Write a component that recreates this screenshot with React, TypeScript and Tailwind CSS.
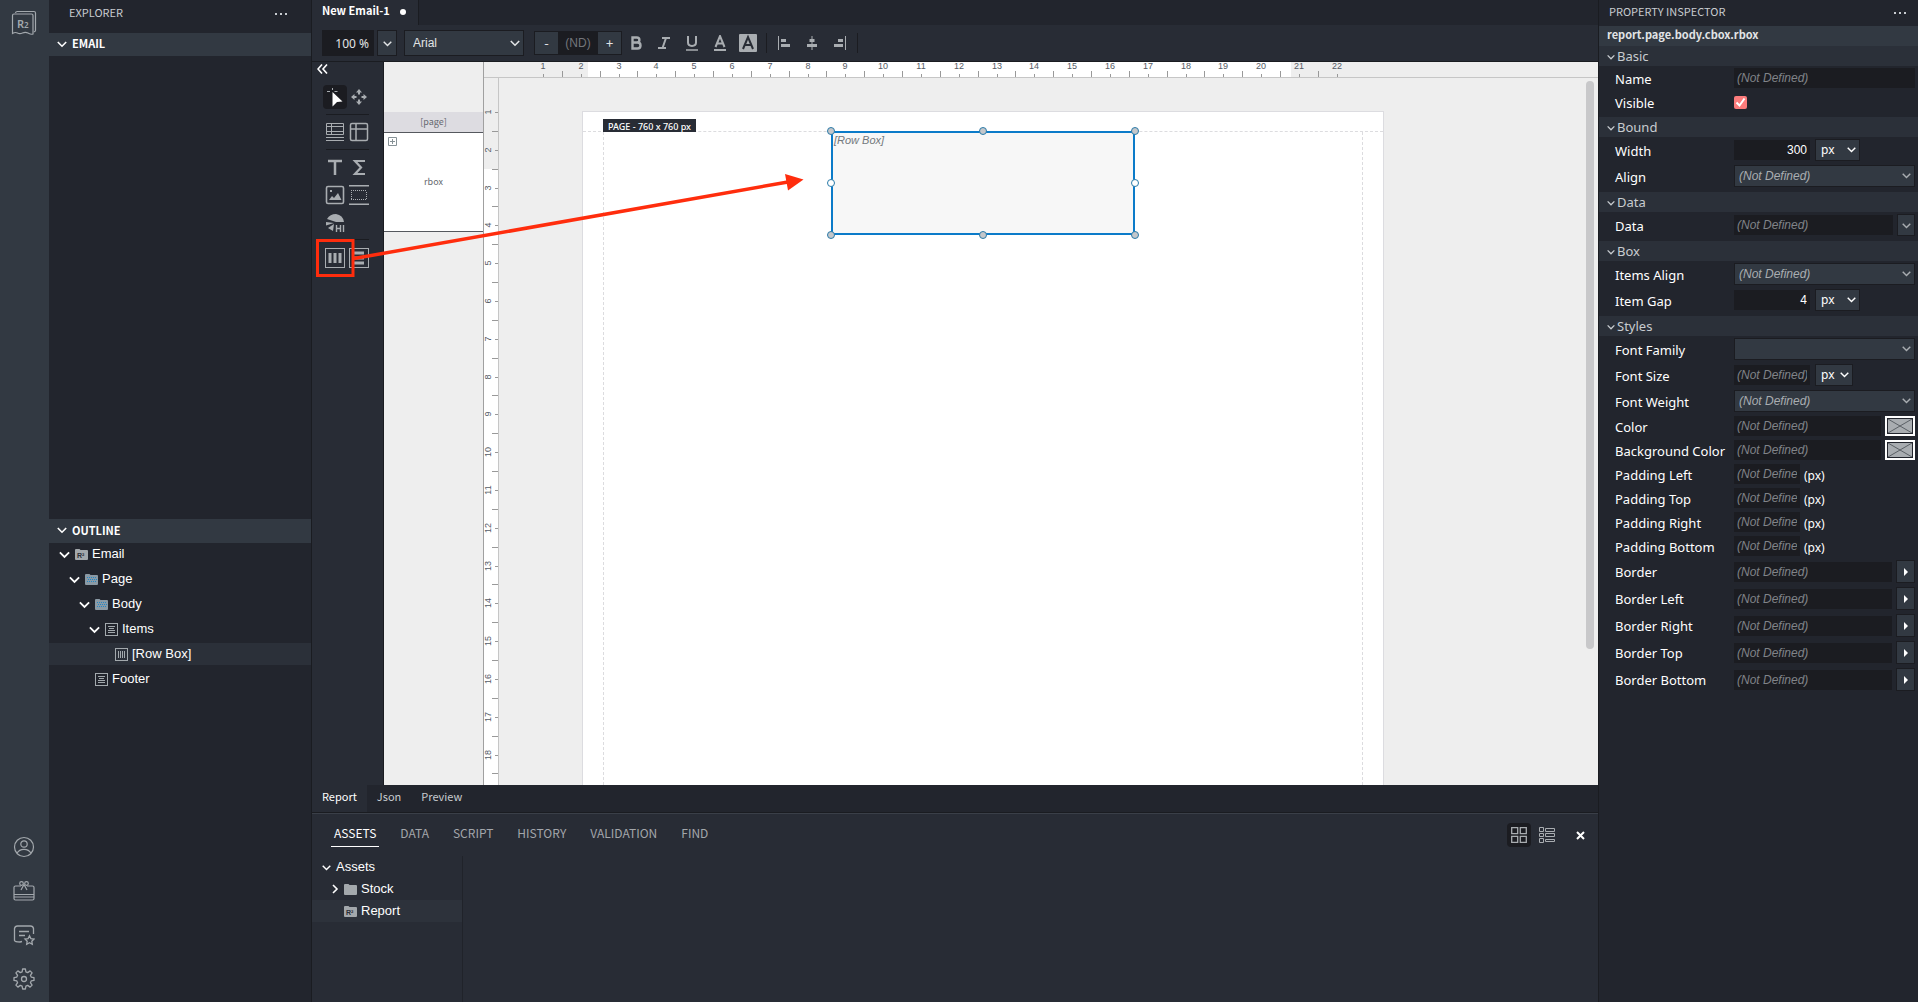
import { ReactNode, useState } from "react";

const CM = 37.795;

const OUTLINE = [
  { label: "Email", depth: 0, open: true, icon: "report" },
  { label: "Page", depth: 1, open: true, icon: "bluefolder" },
  { label: "Body", depth: 2, open: true, icon: "bluefolder" },
  { label: "Items", depth: 3, open: true, icon: "column" },
  { label: "[Row Box]", depth: 4, open: false, icon: "row" },
  { label: "Footer", depth: 2, open: false, icon: "column" },
];

const INDENT = ["pl-[10px]", "pl-[20px]", "pl-[30px]", "pl-[40px]", "pl-[50px]"];

const EDITOR_TABS = ["Report", "Json", "Preview"];
const PANEL_TABS = ["ASSETS", "DATA", "SCRIPT", "HISTORY", "VALIDATION", "FIND"];

function Chevron({ size = 10, right = false }: { size?: number; right?: boolean }) {
  return (
    <svg width={size} height={size} viewBox="0 0 10 10" fill="none" stroke="currentColor" strokeWidth="1.6">
      <path d={right ? "M3 1l4 4-4 4" : "M.8 3l4.2 4.2L9.2 3"} />
    </svg>
  );
}

function Dots() {
  return (
    <svg width="14" height="4" fill="#c8ccd0">
      <rect x="1" y="1" width="2" height="2" />
      <rect x="6" y="1" width="2" height="2" />
      <rect x="11" y="1" width="2" height="2" />
    </svg>
  );
}

function TreeIcon({ name }: { name: string }) {
  if (name === "column" || name === "row") {
    return (
      <svg width="13" height="13" fill="none" stroke="#a3a9ad">
        <rect x=".5" y=".5" width="12" height="12" />
        {name === "column" ? (
          <path d="M3 3.500h7M4 5.500h5M3 7.500h7M3 9.500h7" />
        ) : (
          <path d="M3.500 3v7M5.500 3v7M7.500 3v7M9.500 3v7" />
        )}
      </svg>
    );
  }
  return (
    <svg width="13" height="11">
      <path d="M0 1q0-1 1-1h3.500l1 1H12q1 0 1 1v8q0 1-1 1H1q-1 0-1-1z" fill={name === "bluefolder" ? "#8b9aa5" : "#a3a8ac"} />
      {name === "bluefolder" && (
        <path d="M2 3.500h9M3 5.500h9M2 7.500h9" stroke="#1f87c9" strokeDasharray="1 1" />
      )}
      {name === "report" && (
        <text x="2" y="9" fontSize="7" fontWeight="700" fill="#2b2f37" className="font-['Liberation_Sans',sans-serif]">
          R²
        </text>
      )}
    </svg>
  );
}

function ActivityBar() {
  return (
    <aside className="flex w-[49px] flex-none flex-col items-center justify-between bg-[#323942] pb-3 pr-px pt-[10px] text-[#a3a8ad]">
      <button aria-label="Home">
        <svg width="26" height="26" viewBox="0 0 26 26" fill="none" stroke="currentColor" strokeWidth="1.2">
          <path d="M1.500 5.500q0-1.500 1.500-1.500h17.500q1.500 0 1.500 1.500V24c-2 .8-3.500-.2-5-1-1.800-.9-3.500-.9-5.500 0-2 .9-3.600.8-5 0-1.500-.8-3.500-.4-5 .4z" />
          <path d="M4.500 3q.2-1.500 1.700-1.500H23q1.500 0 1.500 1.500v17.500q0 1.200-1.700 1.500" />
          <text x="6" y="17.500" fontSize="11" stroke="none" fill="currentColor" className="font-['Noto_Sans',sans-serif] font-semibold">R</text>
          <text x="13" y="17.500" fontSize="8" stroke="none" fill="currentColor" className="font-['Noto_Sans',sans-serif] font-semibold">2</text>
        </svg>
      </button>
      <div className="flex flex-col items-center gap-[22px]">
        <button aria-label="Account">
          <svg width="22" height="22" viewBox="0 0 22 22" fill="none" stroke="currentColor" strokeWidth="1.200">
            <circle cx="11" cy="11" r="9.500" />
            <circle cx="11" cy="8" r="3.200" />
            <path d="M4 17.300c1.500-3 4-4 7-4s5.500 1 7 4" />
          </svg>
        </button>
        <button aria-label="What's new">
          <svg width="22" height="22" viewBox="0 0 22 22" fill="none" stroke="currentColor" strokeWidth="1.200">
            <path d="M8 6H2.500Q1 6 1 7.500v11Q1 20 2.500 20h17q1.500 0 1.500-1.500v-11Q21 6 19.500 6H14" />
            <path d="M1 14.500h20M1 17h20" />
            <circle cx="8.500" cy="3.500" r="1.800" />
            <circle cx="13.500" cy="3.500" r="1.800" />
            <path d="M11 4.500L8 10M11 4.500l3 5.500" />
          </svg>
        </button>
        <button aria-label="Feedback">
          <svg width="22" height="22" viewBox="0 0 22 22" fill="none" stroke="currentColor" strokeWidth="1.300">
            <path d="M9 17.500l-2 .5q-5 0-5.500-1.500V4.500Q2 2 4.500 2h13Q20 2 20.500 4.500V10" />
            <path d="M6 7.500h10M6 11.500h6" />
            <path d="M16.500 11.800l1.400 2.800 3.100.4-2.200 2.200.5 3.100-2.800-1.500-2.800 1.500.5-3.100L12 15l3.100-.4z" />
          </svg>
        </button>
        <button aria-label="Settings">
          <svg width="22" height="22" viewBox="0 0 22 22" fill="none" stroke="currentColor" strokeWidth="1.300" strokeLinejoin="round">
            <path d="M9.600 1h2.800l.5 2.800 1.800.8 2.400-1.700 2 2-1.700 2.400.8 1.800 2.800.5v2.800l-2.800.5-.8 1.800 1.700 2.400-2 2-2.400-1.700-1.800.8-.5 2.800H9.600l-.5-2.800-1.800-.8-2.400 1.700-2-2 1.700-2.400-.8-1.800L1 12.400V9.600l2.800-.5.800-1.800L2.900 4.900l2-2 2.400 1.700 1.800-.8z" />
            <circle cx="11" cy="11" r="2.500" />
          </svg>
        </button>
      </div>
    </aside>
  );
}

function Explorer() {
  const [selected, setSelected] = useState("[Row Box]");
  return (
    <aside className="flex w-[263px] flex-none flex-col border-r border-[#1a1c21] bg-[#22252d] text-white">
      <header className="flex h-[33px] flex-none items-center justify-between pb-[9px] pl-5 pr-[23px] text-[11px] text-[#c8ccd0]">
        EXPLORER
        <button aria-label="Explorer menu" className="pt-1"><Dots /></button>
      </header>
      <section className="flex h-[486px] flex-none flex-col">
        <h2 className="flex h-[23px] items-center gap-[5px] bg-[#323942] pb-[2px] pl-2 text-[11px] font-bold">
          <Chevron /> EMAIL
        </h2>
      </section>
      <section>
        <h2 className="flex h-6 items-center gap-[5px] bg-[#323942] pb-[2px] pl-2 text-[11px] font-bold">
          <Chevron /> OUTLINE
        </h2>
        <ul className="flex flex-col gap-[3px] font-['Liberation_Sans',sans-serif] text-[13px]">
          {OUTLINE.map((n) => (
            <li key={n.label}>
              <button
                onClick={() => setSelected(n.label)}
                className={`flex h-[22px] w-full items-center ${INDENT[n.depth]} ${
                  selected === n.label ? "bg-[#2b3039]" : ""
                }`}
              >
                <span className="w-4 flex-none">{n.open && <Chevron size={11} />}</span>
                <TreeIcon name={n.icon} />
                <span className="ml-1">{n.label}</span>
              </button>
            </li>
          ))}
        </ul>
      </section>
    </aside>
  );
}

function Toolbar() {
  return (
    <div className="flex h-[37px] flex-none items-center border-b border-[#1a1c21] bg-[#282c35] pl-[10px] text-[13px] text-[#e2e4e6]">
      <input aria-label="Zoom" defaultValue="100 %" className="h-[26px] w-[52px] bg-[#1b1c21] pr-[5px] text-right font-['Noto_Sans',sans-serif] text-[12px] outline-none" />
      <button aria-label="Zoom levels" className="ml-[3px] flex h-[26px] w-5 items-center justify-center border border-[#1b1c21] bg-[#323942]">
        <Chevron size={9} />
      </button>
      <div className="relative ml-[7px]">
        <select aria-label="Font" className="h-[26px] w-[120px] appearance-none border border-[#1b1c21] bg-[#323942] pl-2 font-['Liberation_Sans',sans-serif] text-[12px]">
          <option>Arial</option>
        </select>
        <span className="pointer-events-none absolute right-1 top-2"><Chevron size={10} /></span>
      </div>
      <div className="ml-[10px] flex h-6 items-center border border-[#1b1c21] bg-[#323942]">
        <button aria-label="Smaller" className="w-[23px]">-</button>
        <input aria-label="Font size" placeholder="(ND)" className="h-full w-10 bg-[#1b1c21] text-center font-['Liberation_Sans',sans-serif] text-[12px] outline-none placeholder:text-[#73767b]" />
        <button aria-label="Larger" className="w-[23px]">+</button>
      </div>
      <div className="flex items-center text-[#a9adb1]">
        <button aria-label="Bold" className="flex w-7 justify-center">
          <svg width="12" height="14" fill="none" stroke="currentColor" strokeWidth="2.400">
            <path d="M2.500 1.500h4.200c3.600 0 3.600 5 0 5H2.500zM2.500 6.500h5c4 0 4 6 0 6h-5z" />
          </svg>
        </button>
        <button aria-label="Italic" className="flex w-7 justify-center">
          <svg width="12" height="14" fill="none" stroke="currentColor" strokeWidth="2">
            <path d="M4 2h8M0 12h8M8 2L4.500 12" />
          </svg>
        </button>
        <button aria-label="Underline" className="flex w-7 justify-center">
          <svg width="12" height="16" fill="none" stroke="currentColor" strokeWidth="2">
            <path d="M2 1v6.500c0 4.500 8 4.500 8 0V1" />
            <path d="M0 15h12" strokeWidth="1.500" />
          </svg>
        </button>
        <button aria-label="Text color" className="flex w-7 justify-center">
          <svg width="12" height="16" fill="none" stroke="currentColor" strokeWidth="2">
            <path d="M1.500 12L6 1l4.500 11M3 8.500h6" />
            <path d="M0 15h12" />
          </svg>
        </button>
        <button aria-label="Highlight color" className="flex w-7 justify-center">
          <svg width="18" height="18" fill="none">
            <rect width="18" height="18" rx="1" fill="currentColor" />
            <path d="M4 15L9 3l5 12M5.500 11h7" stroke="#282c35" strokeWidth="2" />
          </svg>
        </button>
        <span className="ml-1 h-5 w-px bg-[#1b1c21]" />
        <button aria-label="Align left" className="ml-[11px]">
          <svg width="12" height="14" fill="currentColor">
            <path d="M0 0h1v14H0zM3 3h5v3H3zM3 8h9v3H3z" />
          </svg>
        </button>
        <button aria-label="Align center" className="ml-4">
          <svg width="12" height="14" fill="currentColor">
            <path d="M5.500 0h1v14h-1zM3.500 3h5v3h-5zM1 8h10v3H1z" />
          </svg>
        </button>
        <button aria-label="Align right" className="ml-4">
          <svg width="12" height="14" fill="currentColor">
            <path d="M11 0h1v14h-1zM4 3h5v3H4zM0 8h9v3H0z" />
          </svg>
        </button>
        <span className="ml-[11px] h-5 w-px bg-[#1b1c21]" />
      </div>
    </div>
  );
}

function Tool({ label, active = false, children }: { label: string; active?: boolean; children: ReactNode }) {
  return (
    <button aria-label={label} className={`flex h-6 w-6 items-center justify-center rounded-sm ${active ? "bg-[#1b1c21]" : ""}`}>
      <svg width="20" height="20" viewBox="0 0 20 20" fill="none" stroke="currentColor">
        {children}
      </svg>
    </button>
  );
}

function Toolbox() {
  return (
    <div className="flex w-[71px] flex-none flex-col bg-[#282c35] text-[#a9adb1]">
      <button aria-label="Collapse" className="ml-[5px] mt-px flex h-[12px] w-[12px] items-center text-white">
        <svg width="11" height="10" fill="none" stroke="currentColor" strokeWidth="1.600">
          <path d="M5 .5L1 5l4 4.500M10 .5L6 5l4 4.500" />
        </svg>
      </button>
      <div className="ml-[11px] mt-[10px] flex w-12 justify-between">
        <Tool label="Select" active>
          <path d="M7.500 3V1M2 4.500h3M9.500 4.500h3" />
          <path d="M7.500 5l10 9.500-5.500.5-4.500 4.500z" fill="#fff" stroke="none" />
        </Tool>
        <Tool label="Move">
          <path d="M10 2l3 3.500h-2v2H9v-2H7zM10 18l3-3.500h-2v-2H9v2H7zM2 10l3.500-3v2h2v2h-2v2zM18 10l-3.500-3v2h-2v2h2v2z" fill="currentColor" stroke="none" />
        </Tool>
      </div>
      <hr className="ml-[14px] mt-[5px] w-[43px] border-[#1a1c21]" />
      <div className="ml-[11px] mt-[5px] flex w-12 justify-between">
        <Tool label="Data table">
          <path d="M1.500 1.500h17v11h-17zM1.500 4.500h17M6.500 1.500v11M1.500 9.500h17M1 15.500h18M1 18.500h18" />
        </Tool>
        <Tool label="Table">
          <rect x="1.500" y="1.500" width="17" height="17" rx="1.500" strokeWidth="1.500" />
          <path d="M1.500 7h17M7 1.500v17" strokeWidth="1.500" />
        </Tool>
      </div>
      <hr className="ml-[14px] mt-[5px] w-[43px] border-[#1a1c21]" />
      <div className="ml-[11px] mt-[5px] grid w-12 grid-cols-2 gap-y-1">
        <Tool label="Text">
          <path d="M3 4h14M10 4v14" strokeWidth="2.500" />
        </Tool>
        <Tool label="Expression">
          <path d="M16 4H6l6 6.500L6 17h10" strokeWidth="2.200" />
        </Tool>
        <Tool label="Image">
          <rect x="1.500" y="1.500" width="17" height="17" rx="1.500" strokeWidth="1.600" />
          <path d="M4 15l3-4 2 2 4-5 3.500 7zM5 5h2v2H5z" fill="currentColor" stroke="none" />
        </Tool>
        <Tool label="Spacer">
          <path d="M0 .8h20M0 19.200h20" strokeWidth="1.400" />
          <path d="M2 5.500h16M2 14.500h16M2.500 7v7M17.500 7v7" strokeDasharray="1 1" />
        </Tool>
        <Tool label="Html">
          <path d="M2 6Q5 1 11 1q7 1 8 8H11zM1 9l8 1-8 2.500zM9 11l-1 7-5-3z" fill="currentColor" stroke="none" />
          <path d="M11.500 12v7M15.500 12v7M11.500 15.500h4M18.500 12v7" strokeWidth="1.400" />
        </Tool>
      </div>
      <hr className="ml-[14px] mt-1 w-[43px] border-[#1a1c21]" />
      <div className="ml-[11px] mt-[6px] flex w-12 justify-between">
        <Tool label="Row box">
          <rect x=".5" y=".5" width="19" height="19" />
          <path d="M5 5v10M10 5v10M15 5v10" strokeWidth="3" />
        </Tool>
        <Tool label="Column box">
          <rect x=".5" y=".5" width="19" height="19" />
          <path d="M5 5h10M5 10h10M5 15h10" strokeWidth="3" />
        </Tool>
      </div>
    </div>
  );
}

function HRuler() {
  return (
    <svg className="block h-4 w-full flex-none border-b border-[#c6c6c6] bg-[#eee]">
      <rect x="104" y="0" width="703" height="16" fill="#fff" />
      {Array.from({ length: 22 }, (_, i) => {
        const x = Math.round(59 + i * CM);
        const half = Math.round(59 + (i + 0.5) * CM);
        return (
          <g key={i}>
            <path d={`M${x + 0.5} 12v3${i < 21 ? `M${half + 0.5} 9v6` : ""}`} stroke="#999" />
            <text x={x} y="7" textAnchor="middle" fontSize="9" fill="#555b66" className="font-['Liberation_Sans',sans-serif]">
              {i + 1}
            </text>
          </g>
        );
      })}
    </svg>
  );
}

function VRuler() {
  return (
    <svg className="block h-full w-[15px] flex-none border-r border-[#c6c6c6] bg-white">
      <rect width="15" height="91" fill="#eee" />
      {Array.from({ length: 18 }, (_, i) => {
        const y = Math.round(34 + i * CM);
        const half = Math.round(34 + (i + 0.5) * CM);
        return (
          <g key={i}>
            <path d={`M11 ${y + 0.5}h3M8 ${half + 0.5}h6`} stroke="#999" />
            <text
              transform={`translate(7 ${y}) rotate(-90)`}
              textAnchor="middle"
              fontSize="9"
              fill="#555b66"
              className="font-['Liberation_Sans',sans-serif]"
            >
              {i + 1}
            </text>
          </g>
        );
      })}
    </svg>
  );
}

const HANDLES = [
  "-left-[6px] -top-[6px] bg-[#c4c7cb]",
  "left-[146px] -top-[6px] bg-[#c4c7cb]",
  "-right-[6px] -top-[6px] bg-[#c4c7cb]",
  "-left-[6px] top-[46px] bg-white",
  "-right-[6px] top-[46px] bg-white",
  "-left-[6px] -bottom-[6px] bg-[#c4c7cb]",
  "left-[146px] -bottom-[6px] bg-[#c4c7cb]",
  "-right-[6px] -bottom-[6px] bg-[#c4c7cb]",
];

function Canvas() {
  return (
    <div className="flex min-w-0 flex-1 border-l border-[#1a1c21] bg-[#eee]">
      <div className="flex w-[100px] flex-none flex-col border-r border-[#a0a0a0] pt-[50px] text-[9px] text-[#666a70]">
        <div className="flex h-[21px] items-center justify-center border-b border-[#55585e] bg-[#dddce1]">[page]</div>
        <div className="relative flex h-[99px] items-center justify-center border-b border-[#55585e] bg-white">
          <button aria-label="Expand" className="absolute left-1 top-1">
            <svg width="9" height="9" fill="none" stroke="#869196">
              <path d="M.5 .5h8v8h-8zM2 4.500h5M4.500 2v5" />
            </svg>
          </button>
          rbox
        </div>
      </div>
      <div className="flex min-w-0 flex-1 flex-col">
        <HRuler />
        <div className="relative flex min-h-0 flex-1 overflow-hidden">
          <VRuler />
          <div className="ml-[83px] mt-[33px] flex w-[802px] flex-none flex-col border border-b-0 border-[#dcdce0] bg-white">
            <div className="flex h-5 flex-none border-b border-dashed border-[#dcdcdf]">
              <span className="ml-5 mt-[7px] h-[13px] whitespace-nowrap bg-[#282c35] px-[5px] font-['Noto_Sans',sans-serif] text-[9px] font-medium leading-[16px] text-white">
                PAGE - 760 x 760 px
              </span>
            </div>
            <div className="mx-5 flex flex-1 justify-center border-x border-dashed border-[#dcdcdf]">
              <div className="relative -mt-px h-[104px] w-[304px] border-2 border-[#0b7bc9] bg-[#f7f7f7]">
                <span className="block pl-px font-['Liberation_Sans',sans-serif] text-[11px] italic leading-[15px] text-[#73777c]">
                  [Row Box]
                </span>
                {HANDLES.map((h) => (
                  <span key={h} className={`absolute h-2 w-2 rounded-full border border-[#2a7ba9] ${h}`} />
                ))}
              </div>
            </div>
          </div>
          <div className="absolute right-[4px] top-[3px] h-[568px] w-2 rounded-full bg-[#c8c8ca]" />
        </div>
      </div>
    </div>
  );
}

function BottomPanel() {
  const [tab, setTab] = useState("ASSETS");
  return (
    <section className="flex h-[189px] flex-none flex-col border-t border-[#3a3f48] bg-[#282c35]">
      <div className="flex h-[42px] flex-none items-start pl-[19px] pr-[13px]">
        <nav className="flex gap-[18px] pt-2 text-[12px]">
          {PANEL_TABS.map((t) => (
            <button
              key={t}
              onClick={() => setTab(t)}
              className={`border-b px-[3px] pb-1 pt-[2px] leading-[18px] ${
                tab === t ? "border-white text-white" : "border-transparent text-[#a3a6ab]"
              }`}
            >
              {t}
            </button>
          ))}
        </nav>
        <div className="ml-auto mt-[9px] flex items-center text-[#a9adb1]">
          <button aria-label="Grid view" className="flex h-6 w-6 items-center justify-center rounded-sm bg-[#1b1c21]">
            <svg width="16" height="16" fill="none" stroke="currentColor" strokeWidth="1.300">
              <path d="M.7.700h6v6h-6zM9.300.700h6v6h-6zM.7 9.300h6v6h-6zM9.300 9.300h6v6h-6z" />
            </svg>
          </button>
          <button aria-label="List view" className="ml-2">
            <svg width="16" height="16" fill="none" stroke="currentColor">
              <path d="M.5.500h4v4h-4zM.5 6.500h4v3h-4zM.5 11.500h4v4h-4zM6.500 1.500h9v3h-9zM6.500 6.500h9v3h-9zM6.500 12.500h9v2h-9z" />
            </svg>
          </button>
          <button aria-label="Close" className="ml-[21px] text-white">
            <svg width="9" height="9" stroke="currentColor" strokeWidth="2">
              <path d="M1 1l7 7M8 1L1 8" />
            </svg>
          </button>
        </div>
      </div>
      <div className="w-[151px] flex-1 border-r border-[#20232a] font-['Liberation_Sans',sans-serif] text-[13px] text-white">
        <button className="flex h-[22px] w-full items-center gap-[5px] pl-[10px]">
          <Chevron size={9} /> Assets
        </button>
        <button className="flex h-[22px] w-full items-center gap-1 pl-[18px]">
          <Chevron size={10} right />
          <TreeIcon name="folder" /> Stock
        </button>
        <button className="flex h-[22px] w-full items-center gap-1 bg-[#2d323b] pl-8">
          <TreeIcon name="report" /> Report
        </button>
      </div>
    </section>
  );
}

function Annotation() {
  return (
    <svg className="pointer-events-none absolute inset-0 h-full w-full" fill="none" stroke="#ff2d0d">
      <rect x="5.500" y="240.500" width="35.500" height="35" strokeWidth="3" />
      <path d="M42 258.500L476 182" strokeWidth="3.500" />
      <path d="M473 174l18.500 5.500L476 190.500z" fill="#ff2d0d" stroke="none" />
    </svg>
  );
}

function Section({ title, children }: { title: string; children: ReactNode }) {
  return (
    <section className="pb-[3px]">
      <h3 className="flex h-5 items-center gap-[2px] bg-[#2b3039] pl-2 pt-[2px] text-[13px] text-[#c8ccd0]">
        <Chevron size={8} /> {title}
      </h3>
      {children}
    </section>
  );
}

const FIELD = "h-5 min-w-0 bg-[#1b1c21] px-[3px] font-['Liberation_Sans',sans-serif] text-[12px] text-white outline-none placeholder:italic placeholder:text-[#808388]";
const BOX = "border border-[#1b1c21] bg-[#323942]";

function Row({ label, h = "h-[26px]", children }: { label: string; h?: string; children: ReactNode }) {
  return (
    <div className={`flex items-center pl-4 pr-[3px] ${h}`}>
      <label htmlFor={label} className="w-[119px] flex-none whitespace-nowrap pt-[3px] text-[13px] text-white">
        {label}
      </label>
      {children}
    </div>
  );
}

function TextRow({ label, h = "h-6", after }: { label: string; h?: string; after?: ReactNode }) {
  return (
    <Row label={label} h={h}>
      <input id={label} placeholder="(Not Defined)" className={`${FIELD} flex-1`} />
      {after}
    </Row>
  );
}

function SelectRow({ label, value = "(Not Defined)" }: { label: string; value?: string }) {
  return (
    <Row label={label}>
      <div className="relative flex-1">
        <select id={label} className={`${BOX} block h-[22px] w-full appearance-none pl-1 font-['Liberation_Sans',sans-serif] text-[12px] italic text-[#a9adb1]`}>
          <option>{value}</option>
        </select>
        <span className="pointer-events-none absolute right-1 top-[6px] text-[#a9adb1]"><Chevron size={9} /></span>
      </div>
    </Row>
  );
}

function UnitRow({ label, value, unitWidth = "w-[45px]" }: { label: string; value?: string; unitWidth?: string }) {
  return (
    <Row label={label}>
      <input
        id={label}
        defaultValue={value}
        placeholder="(Not Defined)"
        className={`${FIELD} w-[76px] ${value ? "text-right" : ""}`}
      />
      <div className={`relative ml-[5px] ${unitWidth}`}>
        <select aria-label={`${label} unit`} className={`${BOX} block h-[22px] w-full appearance-none pl-[5px] font-['Noto_Sans',sans-serif] text-[12px] text-white`}>
          <option>px</option>
        </select>
        <span className="pointer-events-none absolute right-1 top-[6px] text-white"><Chevron size={9} /></span>
      </div>
    </Row>
  );
}

function Swatch({ label }: { label: string }) {
  return (
    <button aria-label={label} className="ml-1 h-5 w-[30px] border-2 border-white bg-[#22252d] p-px">
      <svg width="24" height="14" className="block bg-[#a9adb1]" stroke="#5b6066">
        <path d="M0 0l24 14M24 0L0 14" />
      </svg>
    </button>
  );
}

function Inspector() {
  return (
    <aside className="flex w-[320px] flex-none flex-col border-l border-[#1a1c21] bg-[#22252d] font-['Noto_Sans',sans-serif]">
      <header className="flex h-[26px] items-center justify-between pb-[3px] pl-[10px] pr-[11px] font-['Noto_Sans_CJK_KR',sans-serif] text-[11px] text-[#c8ccd0]">
        PROPERTY INSPECTOR
        <button aria-label="Inspector menu" className="pt-[2px]"><Dots /></button>
      </header>
      <div className="flex h-5 items-center bg-[#323942] pb-[3px] pl-2 font-['Noto_Sans_CJK_KR',sans-serif] text-[11px] font-bold text-[#e2e4e6]">
        report.page.body.cbox.rbox
      </div>
      <Section title="Basic">
        <TextRow label="Name" />
        <Row label="Visible" h="h-6">
          <input
            id="Visible"
            type="checkbox"
            defaultChecked
            className="peer h-[13px] w-[13px] appearance-none rounded-[2px] bg-[#3a3f48] checked:bg-[#fc7c7c]"
          />
          <svg width="13" height="13" className="pointer-events-none -ml-[13px] hidden peer-checked:block" fill="none" stroke="#fff" strokeWidth="2">
            <path d="M2.500 6.500l3 3 5-7" />
          </svg>
        </Row>
      </Section>
      <Section title="Bound">
        <UnitRow label="Width" value="300" />
        <SelectRow label="Align" />
      </Section>
      <Section title="Data">
        <Row label="Data">
          <input id="Data" placeholder="(Not Defined)" className={`${FIELD} flex-1`} />
          <button aria-label="Choose data" className={`${BOX} ml-1 flex h-[22px] w-[18px] items-center justify-center text-[#a9adb1]`}>
            <Chevron size={9} />
          </button>
        </Row>
      </Section>
      <Section title="Box">
        <SelectRow label="Items Align" />
        <UnitRow label="Item Gap" value="4" />
      </Section>
      <Section title="Styles">
        <SelectRow label="Font Family" value="" />
        <UnitRow label="Font Size" unitWidth="w-[38px]" />
        <SelectRow label="Font Weight" />
        <TextRow label="Color" after={<Swatch label="Pick color" />} />
        <TextRow label="Background Color" after={<Swatch label="Pick background color" />} />
        {["Left", "Top", "Right", "Bottom"].map((s) => (
          <Row key={s} label={`Padding ${s}`} h="h-6">
            <input id={`Padding ${s}`} placeholder="(Not Defined)" className={`${FIELD} w-[66px]`} />
            <span className="ml-1 pt-[3px] text-[12px] text-white">(px)</span>
          </Row>
        ))}
        {["Border", "Border Left", "Border Right", "Border Top", "Border Bottom"].map((b) => (
          <TextRow
            key={b}
            label={b}
            h="h-[27px]"
            after={
              <button aria-label={`Edit ${b}`} className={`${BOX} ml-1 flex h-[23px] w-[19px] items-center justify-center`}>
                <svg width="4" height="8" fill="#fff">
                  <path d="M0 0l4 4-4 4z" />
                </svg>
              </button>
            }
          />
        ))}
      </Section>
    </aside>
  );
}

export default function App() {
  const [view, setView] = useState("Report");
  return (
    <div className="flex h-screen min-h-[720px] overflow-hidden bg-[#22252d] font-['Noto_Sans_CJK_KR',sans-serif]">
      <ActivityBar />
      <Explorer />
      <main className="relative flex min-w-0 flex-1 flex-col">
        <div className="flex h-[25px] flex-none bg-[#22252d]">
          <div className="flex items-center gap-[10px] border-r border-[#1a1c21] bg-[#282c35] pb-[5px] pl-[10px] pr-3 text-[11px] font-bold text-white">
            New Email-1
            <span className="mt-[3px] h-[6px] w-[6px] rounded-full bg-white" />
          </div>
        </div>
        <Toolbar />
        <div className="flex min-h-0 flex-1">
          <Toolbox />
          <Canvas />
        </div>
        <div className="flex h-7 flex-none border-b border-[#1a1c21] text-[11px] text-[#c8ccd0]">
          {EDITOR_TABS.map((t) => (
            <button
              key={t}
              onClick={() => setView(t)}
              className={`px-[10px] pb-[5px] ${view === t ? "bg-[#282c35] text-white" : ""}`}
            >
              {t}
            </button>
          ))}
        </div>
        <BottomPanel />
        <Annotation />
      </main>
      <Inspector />
    </div>
  );
}
